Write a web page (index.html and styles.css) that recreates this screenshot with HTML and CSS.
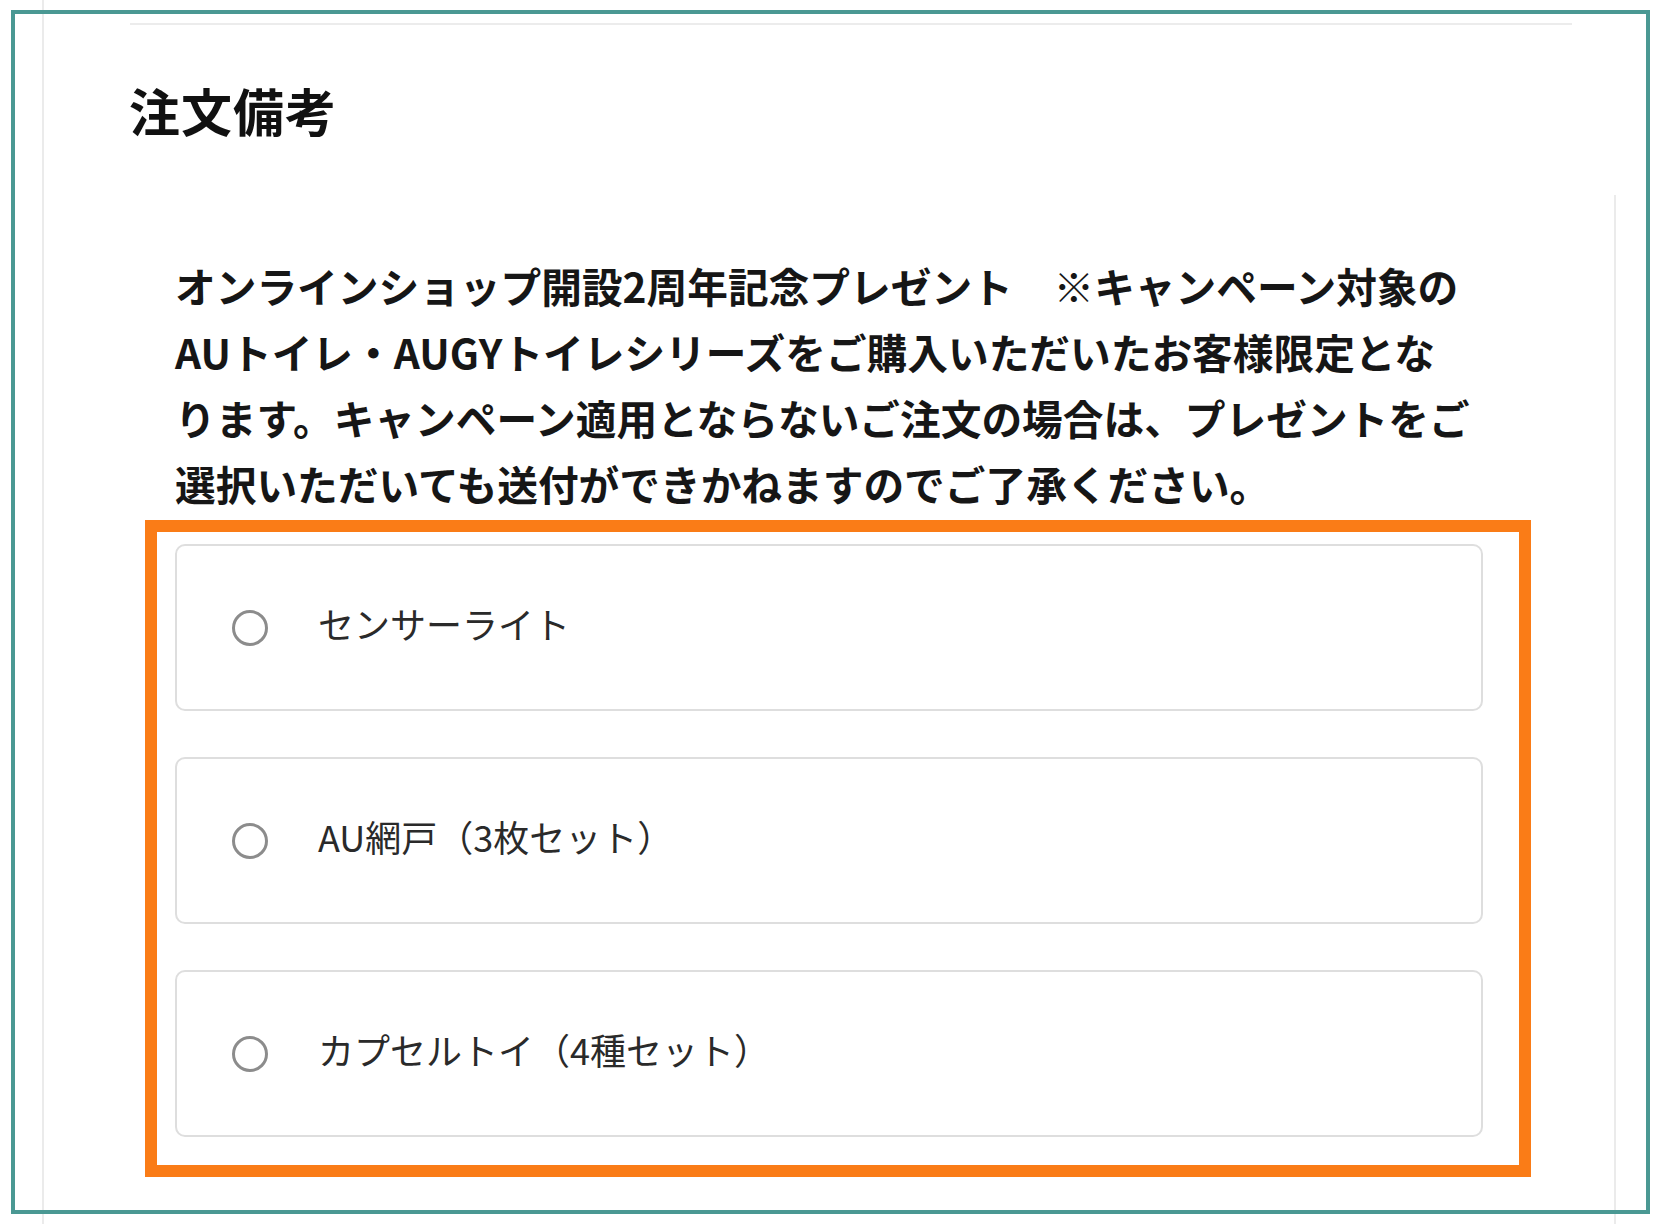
FILE: index.html
```html
<!DOCTYPE html>
<html lang="ja">
<head>
<meta charset="utf-8">
<title>注文備考</title>
<link rel="stylesheet" href="styles.css">
</head>
<body>
<div class="page">
  <section class="head-sec">
    <div class="top-rule"></div>
    <h2 class="title">注文備考</h2>
  </section>
  <section class="body-sec">
    <p class="notice">オンラインショップ開設2周年記念プレゼント　※キャンペーン対象の<br>AUトイレ・AUGYトイレシリーズをご購入いただいたお客様限定とな<br>ります。キャンペーン適用とならないご注文の場合は、プレゼントをご<br>選択いただいても送付ができかねますのでご了承ください。</p>
    <div class="highlight">
      <div class="options">
        <label class="option"><input class="radio" type="radio" name="gift"><span class="opt-label">センサーライト</span></label>
        <label class="option"><input class="radio" type="radio" name="gift"><span class="opt-label">AU網戸（3枚セット）</span></label>
        <label class="option"><input class="radio" type="radio" name="gift"><span class="opt-label">カプセルトイ（4種セット）</span></label>
      </div>
    </div>
  </section>
  <div class="frame"></div>
</div>
</body>
</html>
```
FILE: styles.css
```css
html, body {
  margin: 0;
  padding: 0;
  background: #ffffff;
  overflow: hidden;
}
body {
  font-family: "Noto Sans CJK JP", "Noto Sans", sans-serif;
  color: #141414;
}
.page {
  position: relative;
  width: 1661px;
  height: 1224px;
}
.head-sec {
  margin-left: 42px;
  height: 195px;
  border-left: 2px solid #ebebeb;
  box-sizing: border-box;
  width: 1574px;
  display: flex;
  flex-direction: column;
}
.top-rule {
  margin-top: 23px;
  margin-left: 86px;
  width: 1442px;
  height: 2px;
  background: #ececec;
}
.title {
  margin: 60px 0 0 85px;
  font-size: 51px;
  line-height: 1;
  font-weight: 700;
  color: #111;
  letter-spacing: 1px;
}
.body-sec {
  margin-left: 42px;
  width: 1574px;
  height: 1029px;
  box-sizing: border-box;
  border-left: 2px solid #ebebeb;
  border-right: 2px solid #ebebeb;
  padding-top: 58px;
}
.notice {
  margin: 0 0 3px 131px;
  font-size: 40.7px;
  line-height: 66px;
  font-weight: 700;
  color: #161616;
  white-space: nowrap;
}
.highlight {
  margin-left: 101px;
  width: 1386px;
  box-sizing: border-box;
  border: 12px solid #fa7c17;
  padding: 12px 36px 28px 18px;
}
.options {
  display: flex;
  flex-direction: column;
  gap: 46px;
}
.option {
  height: 167px;
  box-sizing: border-box;
  border: 2px solid #dedede;
  border-radius: 10px;
  display: flex;
  align-items: center;
  padding-left: 55px;
  gap: 50px;
}
.radio {
  appearance: none;
  -webkit-appearance: none;
  margin: 0;
  width: 36px;
  height: 36px;
  border: 3px solid #8c8c8c;
  border-radius: 50%;
  background: #fff;
  box-sizing: border-box;
  flex: none;
}
.opt-label {
  font-size: 36px;
  line-height: 1;
  font-weight: 400;
  color: #2a2a2a;
  margin-bottom: 10px;
}
.frame {
  position: absolute;
  left: 11px;
  top: 10px;
  width: 1639px;
  height: 1204px;
  box-sizing: border-box;
  border: 4px solid #4a9893;
  pointer-events: none;
}
```
